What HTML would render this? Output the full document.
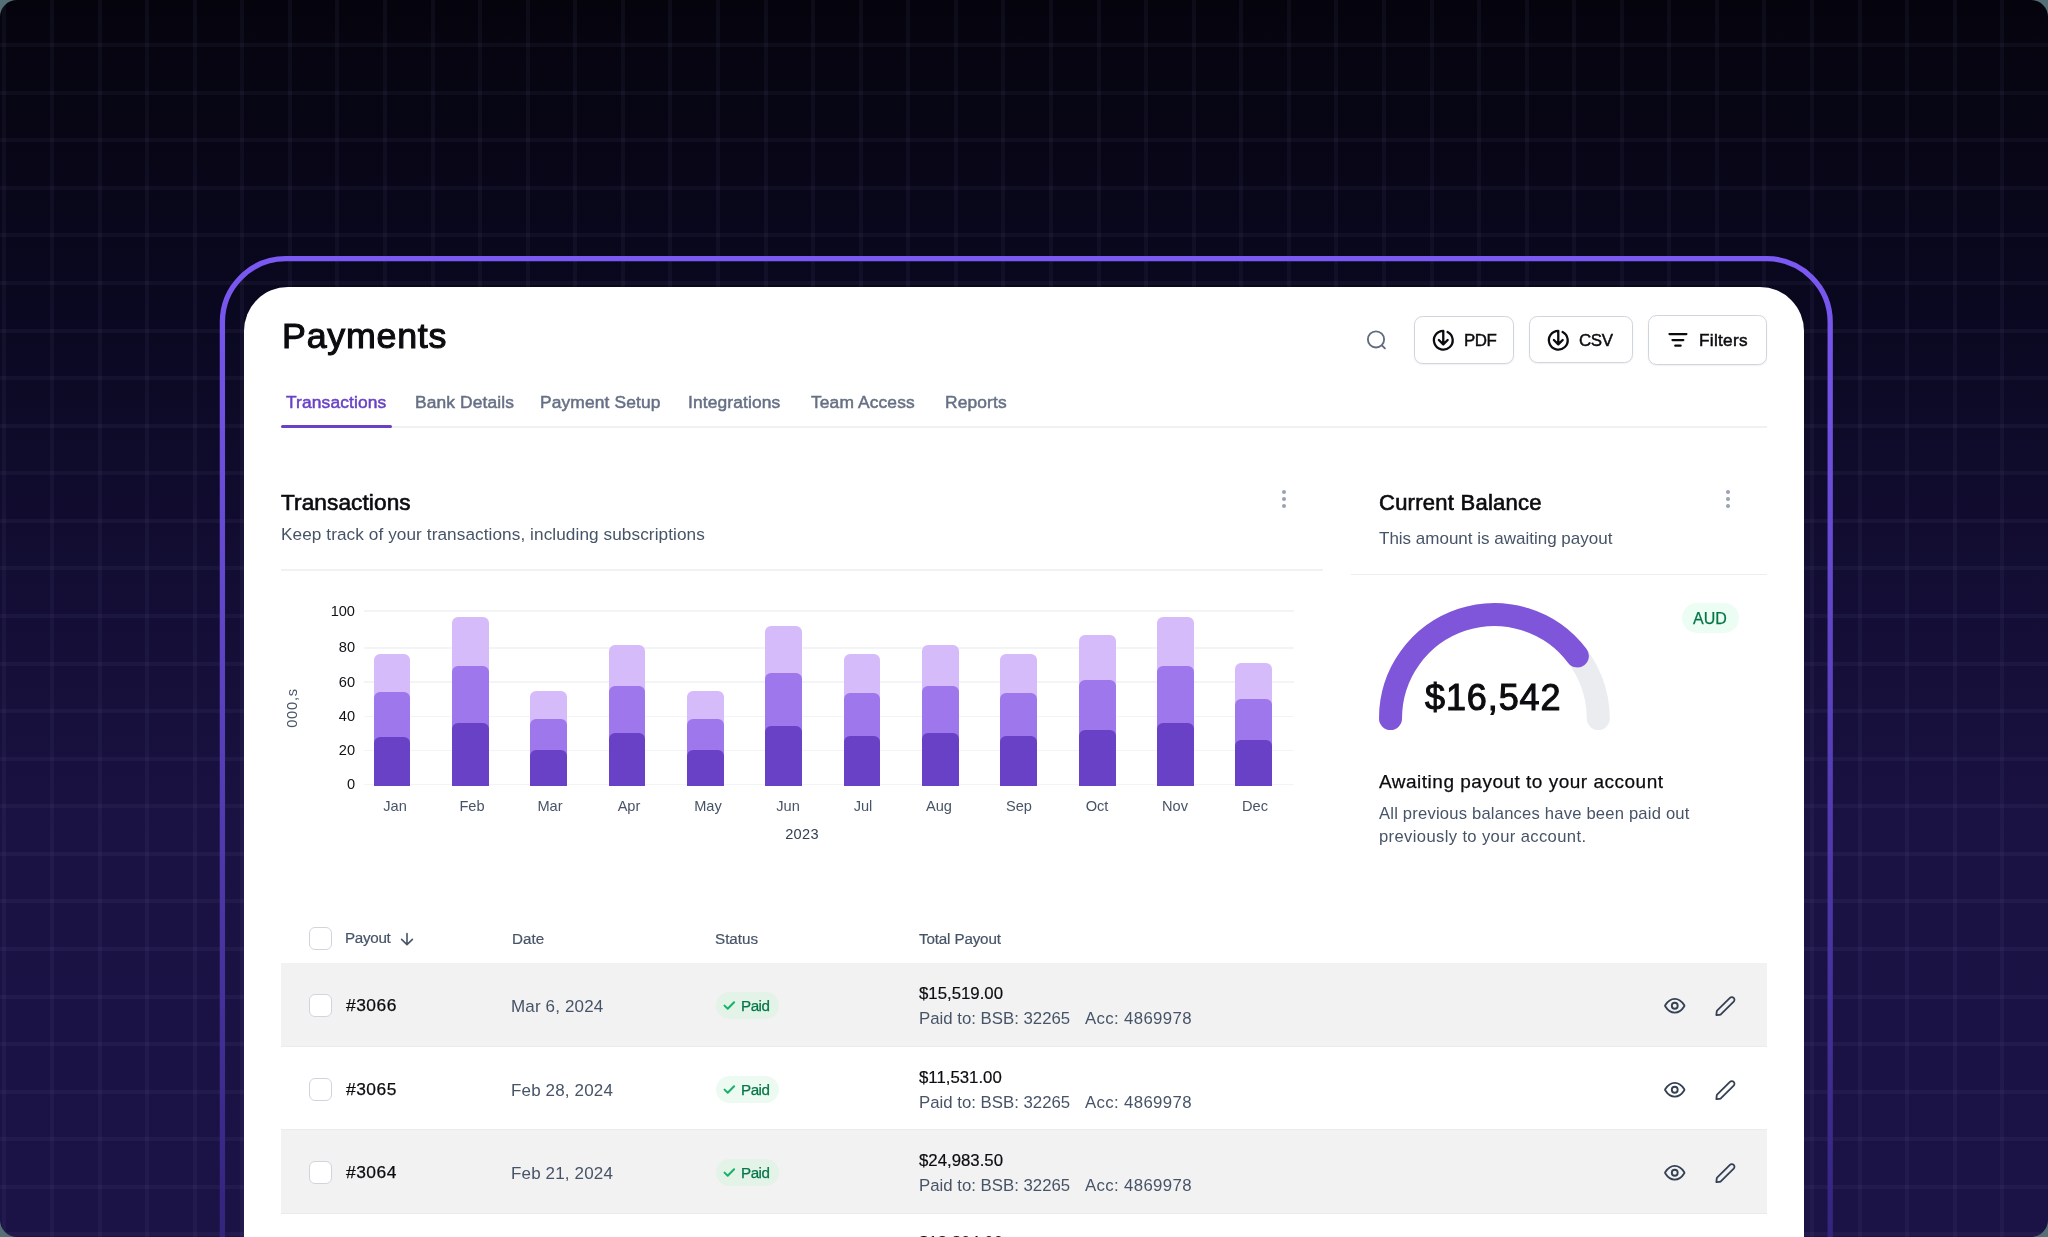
<!DOCTYPE html>
<html><head><meta charset="utf-8"><title>Payments</title>
<style>
html,body{margin:0;padding:0;}
body{width:2048px;height:1237px;overflow:hidden;background:#546f75;position:relative;font-family:"Liberation Sans",sans-serif;}
.a{position:absolute;}
.t{position:absolute;white-space:pre;will-change:transform;}
svg{position:absolute;overflow:visible;}
</style></head><body>
<div class="a" style="left:0;top:0;width:2048px;height:1237px;border-radius:17px;overflow:hidden;background:linear-gradient(180deg,#05040d 0%,#0a0820 25%,#140e36 50%,#1a1243 68%,#1b1245 100%);">
<div class="a" style="left:2.40px;top:0;width:4px;height:1237px;background:rgba(170,160,210,0.055);"></div>
<div class="a" style="left:49.97px;top:0;width:4px;height:1237px;background:rgba(170,160,210,0.055);"></div>
<div class="a" style="left:97.54px;top:0;width:4px;height:1237px;background:rgba(170,160,210,0.055);"></div>
<div class="a" style="left:145.11px;top:0;width:4px;height:1237px;background:rgba(170,160,210,0.055);"></div>
<div class="a" style="left:192.68px;top:0;width:4px;height:1237px;background:rgba(170,160,210,0.055);"></div>
<div class="a" style="left:240.25px;top:0;width:4px;height:1237px;background:rgba(170,160,210,0.055);"></div>
<div class="a" style="left:287.82px;top:0;width:4px;height:1237px;background:rgba(170,160,210,0.055);"></div>
<div class="a" style="left:335.39px;top:0;width:4px;height:1237px;background:rgba(170,160,210,0.055);"></div>
<div class="a" style="left:382.96px;top:0;width:4px;height:1237px;background:rgba(170,160,210,0.055);"></div>
<div class="a" style="left:430.53px;top:0;width:4px;height:1237px;background:rgba(170,160,210,0.055);"></div>
<div class="a" style="left:478.10px;top:0;width:4px;height:1237px;background:rgba(170,160,210,0.055);"></div>
<div class="a" style="left:525.67px;top:0;width:4px;height:1237px;background:rgba(170,160,210,0.055);"></div>
<div class="a" style="left:573.24px;top:0;width:4px;height:1237px;background:rgba(170,160,210,0.055);"></div>
<div class="a" style="left:620.81px;top:0;width:4px;height:1237px;background:rgba(170,160,210,0.055);"></div>
<div class="a" style="left:668.38px;top:0;width:4px;height:1237px;background:rgba(170,160,210,0.055);"></div>
<div class="a" style="left:715.95px;top:0;width:4px;height:1237px;background:rgba(170,160,210,0.055);"></div>
<div class="a" style="left:763.52px;top:0;width:4px;height:1237px;background:rgba(170,160,210,0.055);"></div>
<div class="a" style="left:811.09px;top:0;width:4px;height:1237px;background:rgba(170,160,210,0.055);"></div>
<div class="a" style="left:858.66px;top:0;width:4px;height:1237px;background:rgba(170,160,210,0.055);"></div>
<div class="a" style="left:906.23px;top:0;width:4px;height:1237px;background:rgba(170,160,210,0.055);"></div>
<div class="a" style="left:953.80px;top:0;width:4px;height:1237px;background:rgba(170,160,210,0.055);"></div>
<div class="a" style="left:1001.37px;top:0;width:4px;height:1237px;background:rgba(170,160,210,0.055);"></div>
<div class="a" style="left:1048.94px;top:0;width:4px;height:1237px;background:rgba(170,160,210,0.055);"></div>
<div class="a" style="left:1096.51px;top:0;width:4px;height:1237px;background:rgba(170,160,210,0.055);"></div>
<div class="a" style="left:1144.08px;top:0;width:4px;height:1237px;background:rgba(170,160,210,0.055);"></div>
<div class="a" style="left:1191.65px;top:0;width:4px;height:1237px;background:rgba(170,160,210,0.055);"></div>
<div class="a" style="left:1239.22px;top:0;width:4px;height:1237px;background:rgba(170,160,210,0.055);"></div>
<div class="a" style="left:1286.79px;top:0;width:4px;height:1237px;background:rgba(170,160,210,0.055);"></div>
<div class="a" style="left:1334.36px;top:0;width:4px;height:1237px;background:rgba(170,160,210,0.055);"></div>
<div class="a" style="left:1381.93px;top:0;width:4px;height:1237px;background:rgba(170,160,210,0.055);"></div>
<div class="a" style="left:1429.50px;top:0;width:4px;height:1237px;background:rgba(170,160,210,0.055);"></div>
<div class="a" style="left:1477.07px;top:0;width:4px;height:1237px;background:rgba(170,160,210,0.055);"></div>
<div class="a" style="left:1524.64px;top:0;width:4px;height:1237px;background:rgba(170,160,210,0.055);"></div>
<div class="a" style="left:1572.21px;top:0;width:4px;height:1237px;background:rgba(170,160,210,0.055);"></div>
<div class="a" style="left:1619.78px;top:0;width:4px;height:1237px;background:rgba(170,160,210,0.055);"></div>
<div class="a" style="left:1667.35px;top:0;width:4px;height:1237px;background:rgba(170,160,210,0.055);"></div>
<div class="a" style="left:1714.92px;top:0;width:4px;height:1237px;background:rgba(170,160,210,0.055);"></div>
<div class="a" style="left:1762.49px;top:0;width:4px;height:1237px;background:rgba(170,160,210,0.055);"></div>
<div class="a" style="left:1810.06px;top:0;width:4px;height:1237px;background:rgba(170,160,210,0.055);"></div>
<div class="a" style="left:1857.63px;top:0;width:4px;height:1237px;background:rgba(170,160,210,0.055);"></div>
<div class="a" style="left:1905.20px;top:0;width:4px;height:1237px;background:rgba(170,160,210,0.055);"></div>
<div class="a" style="left:1952.77px;top:0;width:4px;height:1237px;background:rgba(170,160,210,0.055);"></div>
<div class="a" style="left:2000.34px;top:0;width:4px;height:1237px;background:rgba(170,160,210,0.055);"></div>
<div class="a" style="left:2047.91px;top:0;width:4px;height:1237px;background:rgba(170,160,210,0.055);"></div>
<div class="a" style="left:0;top:43.20px;width:2048px;height:4px;background:rgba(170,160,210,0.055);"></div>
<div class="a" style="left:0;top:90.77px;width:2048px;height:4px;background:rgba(170,160,210,0.055);"></div>
<div class="a" style="left:0;top:138.34px;width:2048px;height:4px;background:rgba(170,160,210,0.055);"></div>
<div class="a" style="left:0;top:185.91px;width:2048px;height:4px;background:rgba(170,160,210,0.055);"></div>
<div class="a" style="left:0;top:233.48px;width:2048px;height:4px;background:rgba(170,160,210,0.055);"></div>
<div class="a" style="left:0;top:281.05px;width:2048px;height:4px;background:rgba(170,160,210,0.055);"></div>
<div class="a" style="left:0;top:328.62px;width:2048px;height:4px;background:rgba(170,160,210,0.055);"></div>
<div class="a" style="left:0;top:376.19px;width:2048px;height:4px;background:rgba(170,160,210,0.055);"></div>
<div class="a" style="left:0;top:423.76px;width:2048px;height:4px;background:rgba(170,160,210,0.055);"></div>
<div class="a" style="left:0;top:471.33px;width:2048px;height:4px;background:rgba(170,160,210,0.055);"></div>
<div class="a" style="left:0;top:518.90px;width:2048px;height:4px;background:rgba(170,160,210,0.055);"></div>
<div class="a" style="left:0;top:566.47px;width:2048px;height:4px;background:rgba(170,160,210,0.055);"></div>
<div class="a" style="left:0;top:614.04px;width:2048px;height:4px;background:rgba(170,160,210,0.055);"></div>
<div class="a" style="left:0;top:661.61px;width:2048px;height:4px;background:rgba(170,160,210,0.055);"></div>
<div class="a" style="left:0;top:709.18px;width:2048px;height:4px;background:rgba(170,160,210,0.055);"></div>
<div class="a" style="left:0;top:756.75px;width:2048px;height:4px;background:rgba(170,160,210,0.055);"></div>
<div class="a" style="left:0;top:804.32px;width:2048px;height:4px;background:rgba(170,160,210,0.055);"></div>
<div class="a" style="left:0;top:851.89px;width:2048px;height:4px;background:rgba(170,160,210,0.055);"></div>
<div class="a" style="left:0;top:899.46px;width:2048px;height:4px;background:rgba(170,160,210,0.055);"></div>
<div class="a" style="left:0;top:947.03px;width:2048px;height:4px;background:rgba(170,160,210,0.055);"></div>
<div class="a" style="left:0;top:994.60px;width:2048px;height:4px;background:rgba(170,160,210,0.055);"></div>
<div class="a" style="left:0;top:1042.17px;width:2048px;height:4px;background:rgba(170,160,210,0.055);"></div>
<div class="a" style="left:0;top:1089.74px;width:2048px;height:4px;background:rgba(170,160,210,0.055);"></div>
<div class="a" style="left:0;top:1137.31px;width:2048px;height:4px;background:rgba(170,160,210,0.055);"></div>
<div class="a" style="left:0;top:1184.88px;width:2048px;height:4px;background:rgba(170,160,210,0.055);"></div>
<div class="a" style="left:0;top:1232.45px;width:2048px;height:4px;background:rgba(170,160,210,0.055);"></div>
</div>
<svg style="left:0;top:0" width="2048" height="1237" viewBox="0 0 2048 1237">
<defs><linearGradient id="pg" x1="0" y1="256" x2="0" y2="1237" gradientUnits="userSpaceOnUse">
<stop offset="0" stop-color="#7b59f3"/><stop offset="1" stop-color="#33247c"/></linearGradient></defs>
<rect x="222.4" y="258.7" width="1607.8" height="1200" rx="63.5" ry="63.5" fill="none" stroke="url(#pg)" stroke-width="5.3"/>
</svg>
<div class="a" style="left:244px;top:287px;width:1560px;height:1100px;background:#fff;border-radius:44px;"></div>
<div class="t" style="left:281.50px;top:318.90px;font-size:35.8px;line-height:35.8px;font-weight:400;color:#0c0c10;letter-spacing:0.75px;-webkit-text-stroke:1.1px #0c0c10;">Payments</div>
<svg style="left:1364px;top:328px" width="24" height="24" viewBox="0 0 24 24"><circle cx="12" cy="11.4" r="8.1" fill="none" stroke="#5f6b80" stroke-width="1.85"/><path d="M18.2 17.6 L20.9 20.3" stroke="#5f6b80" stroke-width="1.85" stroke-linecap="round"/></svg>
<div class="a" style="left:1413.6px;top:316.2px;width:100.70000000000005px;height:47.400000000000034px;box-sizing:border-box;border:1.3px solid #d0d5dd;border-radius:8.5px;background:#fff;box-shadow:0 1px 2px rgba(16,24,40,0.06);"></div>
<div class="a" style="left:1528.6px;top:316.3px;width:104.70000000000005px;height:47.0px;box-sizing:border-box;border:1.3px solid #d0d5dd;border-radius:8.5px;background:#fff;box-shadow:0 1px 2px rgba(16,24,40,0.06);"></div>
<div class="a" style="left:1648.1px;top:314.8px;width:118.70000000000005px;height:50.39999999999998px;box-sizing:border-box;border:1.3px solid #d0d5dd;border-radius:8.5px;background:#fff;box-shadow:0 1px 2px rgba(16,24,40,0.06);"></div>
<svg style="left:1432.12px;top:328.92px" width="22.56" height="22.56" viewBox="0 0 24 24"><path d="M16.6 3.1 A10 10 0 1 1 12 2 V16.4 M7.3 11.7 L12 16.4 L16.7 11.7" fill="none" stroke="#0c0c10" stroke-width="2.45" stroke-linecap="round" stroke-linejoin="round"/></svg>
<svg style="left:1547.12px;top:329.02px" width="22.56" height="22.56" viewBox="0 0 24 24"><path d="M16.6 3.1 A10 10 0 1 1 12 2 V16.4 M7.3 11.7 L12 16.4 L16.7 11.7" fill="none" stroke="#0c0c10" stroke-width="2.45" stroke-linecap="round" stroke-linejoin="round"/></svg>
<div class="t" style="left:1464.20px;top:332.69px;font-size:16.9px;line-height:16.9px;font-weight:400;color:#0c0c10;letter-spacing:-0.5px;-webkit-text-stroke:0.45px #0c0c10;">PDF</div>
<div class="t" style="left:1579.30px;top:332.69px;font-size:16.9px;line-height:16.9px;font-weight:400;color:#0c0c10;letter-spacing:-0.4px;-webkit-text-stroke:0.45px #0c0c10;">CSV</div>
<div class="t" style="left:1699.00px;top:332.44px;font-size:17.2px;line-height:17.2px;font-weight:400;color:#0c0c10;letter-spacing:0.3px;-webkit-text-stroke:0.5px #0c0c10;">Filters</div>
<svg style="left:1660px;top:325px" width="36" height="30" viewBox="0 0 36 30"><path d="M9.5 9.1 H26.4 M12.5 15.1 H23.3 M15.3 20.7 H20.6" stroke="#0c0c10" stroke-width="2.3" stroke-linecap="round"/></svg>
<div class="t" style="left:285.60px;top:394.27px;font-size:17.4px;line-height:17.4px;font-weight:400;color:#6941c6;letter-spacing:0.12px;-webkit-text-stroke:0.5px #6941c6;">Transactions</div>
<div class="t" style="left:414.90px;top:394.27px;font-size:17.4px;line-height:17.4px;font-weight:400;color:#667085;letter-spacing:0.12px;-webkit-text-stroke:0.5px #667085;">Bank Details</div>
<div class="t" style="left:539.90px;top:394.27px;font-size:17.4px;line-height:17.4px;font-weight:400;color:#667085;letter-spacing:0.12px;-webkit-text-stroke:0.5px #667085;">Payment Setup</div>
<div class="t" style="left:687.60px;top:394.27px;font-size:17.4px;line-height:17.4px;font-weight:400;color:#667085;letter-spacing:0.12px;-webkit-text-stroke:0.5px #667085;">Integrations</div>
<div class="t" style="left:810.90px;top:394.27px;font-size:17.4px;line-height:17.4px;font-weight:400;color:#667085;letter-spacing:0.12px;-webkit-text-stroke:0.5px #667085;">Team Access</div>
<div class="t" style="left:945.10px;top:394.27px;font-size:17.4px;line-height:17.4px;font-weight:400;color:#667085;letter-spacing:0.12px;-webkit-text-stroke:0.5px #667085;">Reports</div>
<div class="a" style="left:281.00px;top:426.00px;width:1486.00px;height:2.00px;background:#f0f1f3;"></div>
<div class="a" style="left:281.00px;top:425.00px;width:111.00px;height:3.00px;background:#6941c6;border-radius:1.5px;"></div>
<div class="t" style="left:280.80px;top:492.07px;font-size:22.6px;line-height:22.6px;font-weight:400;color:#0c0c10;letter-spacing:0.1px;-webkit-text-stroke:0.65px #0c0c10;">Transactions</div>
<div class="t" style="left:280.50px;top:525.84px;font-size:17.2px;line-height:17.2px;font-weight:400;color:#475467;letter-spacing:0.08px;">Keep track of your transactions, including subscriptions</div>
<div class="a" style="left:1282.00px;top:490.30px;width:4px;height:4px;border-radius:50%;background:#98a2b3;"></div>
<div class="a" style="left:1282.00px;top:497.10px;width:4px;height:4px;border-radius:50%;background:#98a2b3;"></div>
<div class="a" style="left:1282.00px;top:503.90px;width:4px;height:4px;border-radius:50%;background:#98a2b3;"></div>
<div class="a" style="left:281.00px;top:569.00px;width:1042.00px;height:1.80px;background:#f0f1f3;"></div>
<div class="t" style="left:1378.80px;top:491.98px;font-size:22.0px;line-height:22.0px;font-weight:400;color:#0c0c10;letter-spacing:0.25px;-webkit-text-stroke:0.65px #0c0c10;">Current Balance</div>
<div class="t" style="left:1378.50px;top:530.21px;font-size:17.0px;line-height:17.0px;font-weight:400;color:#475467;">This amount is awaiting payout</div>
<div class="a" style="left:1725.70px;top:490.10px;width:4px;height:4px;border-radius:50%;background:#98a2b3;"></div>
<div class="a" style="left:1725.70px;top:497.30px;width:4px;height:4px;border-radius:50%;background:#98a2b3;"></div>
<div class="a" style="left:1725.70px;top:504.30px;width:4px;height:4px;border-radius:50%;background:#98a2b3;"></div>
<div class="a" style="left:1351.00px;top:573.80px;width:416.00px;height:1.60px;background:#eceff2;"></div>
<svg style="left:0;top:0" width="2048" height="1237" viewBox="0 0 2048 1237">
<path d="M1390.50 718.50 A103.9 103.9 0 0 1 1598.30 718.50" fill="none" stroke="#eaecf0" stroke-width="23" stroke-linecap="round"/>
<path d="M1390.50 718.50 A103.9 103.9 0 0 1 1577.38 655.97" fill="none" stroke="#7f56d9" stroke-width="23" stroke-linecap="round"/>
</svg>
<div class="t" style="left:1425.00px;top:679.53px;font-size:36.0px;line-height:36.0px;font-weight:400;color:#0c0c10;letter-spacing:0.9px;-webkit-text-stroke:1.05px #0c0c10;">$16,542</div>
<div class="a" style="left:1682.4px;top:603px;width:56.6px;height:29.9px;border-radius:15px;background:#ecfdf3;"></div>
<div class="t" style="left:1692.50px;top:610.66px;font-size:16px;line-height:16px;font-weight:400;color:#067647;-webkit-text-stroke:0.25px #067647;">AUD</div>
<div class="t" style="left:1378.80px;top:771.52px;font-size:19.0px;line-height:19.0px;font-weight:400;color:#0c0c10;letter-spacing:0.5px;-webkit-text-stroke:0.25px #0c0c10;">Awaiting payout to your account</div>
<div class="t" style="left:1378.80px;top:806.45px;font-size:16.6px;line-height:16.6px;font-weight:400;color:#475467;letter-spacing:0.2px;">All previous balances have been paid out</div>
<div class="t" style="left:1378.80px;top:828.95px;font-size:16.6px;line-height:16.6px;font-weight:400;color:#475467;letter-spacing:0.37px;">previously to your account.</div>
<div class="a" style="left:363.50px;top:610.40px;width:930.20px;height:1.60px;background:#f3f4f6;"></div>
<div class="a" style="left:363.50px;top:647.40px;width:930.20px;height:1.60px;background:#f3f4f6;"></div>
<div class="a" style="left:363.50px;top:681.30px;width:930.20px;height:1.60px;background:#f3f4f6;"></div>
<div class="a" style="left:363.50px;top:715.60px;width:930.20px;height:1.60px;background:#f3f4f6;"></div>
<div class="a" style="left:363.50px;top:749.80px;width:930.20px;height:1.60px;background:#f3f4f6;"></div>
<div class="a" style="left:363.50px;top:783.90px;width:930.20px;height:1.60px;background:#f3f4f6;"></div>
<div class="t" style="left:55.00px;width:300px;text-align:right;top:603.54px;font-size:14.6px;line-height:14.6px;font-weight:400;color:#111116;">100</div>
<div class="t" style="left:55.00px;width:300px;text-align:right;top:640.44px;font-size:14.6px;line-height:14.6px;font-weight:400;color:#111116;">80</div>
<div class="t" style="left:55.00px;width:300px;text-align:right;top:674.64px;font-size:14.6px;line-height:14.6px;font-weight:400;color:#111116;">60</div>
<div class="t" style="left:55.00px;width:300px;text-align:right;top:708.94px;font-size:14.6px;line-height:14.6px;font-weight:400;color:#111116;">40</div>
<div class="t" style="left:55.00px;width:300px;text-align:right;top:743.24px;font-size:14.6px;line-height:14.6px;font-weight:400;color:#111116;">20</div>
<div class="t" style="left:55.00px;width:300px;text-align:right;top:777.24px;font-size:14.6px;line-height:14.6px;font-weight:400;color:#111116;">0</div>
<div class="t" style="left:251.80px;top:698.70px;width:80px;height:18px;line-height:18px;font-size:14.6px;text-align:center;color:#475467;letter-spacing:0.8px;transform:rotate(-90deg);">000,s</div>
<div class="a" style="left:373.50px;top:654.00px;width:36.8px;height:132.00px;background:#d6bbfb;border-radius:6px 6px 0 0;"></div>
<div class="a" style="left:373.50px;top:692.40px;width:36.8px;height:93.60px;background:#9e77ed;border-radius:6px 6px 0 0;"></div>
<div class="a" style="left:373.50px;top:736.50px;width:36.8px;height:49.50px;background:#6941c6;border-radius:6px 6px 0 0;"></div>
<div class="t" style="left:94.50px;width:600px;text-align:center;top:799.44px;font-size:14.6px;line-height:14.6px;font-weight:400;color:#475467;">Jan</div>
<div class="a" style="left:451.86px;top:616.70px;width:36.8px;height:169.30px;background:#d6bbfb;border-radius:6px 6px 0 0;"></div>
<div class="a" style="left:451.86px;top:666.00px;width:36.8px;height:120.00px;background:#9e77ed;border-radius:6px 6px 0 0;"></div>
<div class="a" style="left:451.86px;top:722.60px;width:36.8px;height:63.40px;background:#6941c6;border-radius:6px 6px 0 0;"></div>
<div class="t" style="left:172.00px;width:600px;text-align:center;top:799.44px;font-size:14.6px;line-height:14.6px;font-weight:400;color:#475467;">Feb</div>
<div class="a" style="left:530.22px;top:690.90px;width:36.8px;height:95.10px;background:#d6bbfb;border-radius:6px 6px 0 0;"></div>
<div class="a" style="left:530.22px;top:718.50px;width:36.8px;height:67.50px;background:#9e77ed;border-radius:6px 6px 0 0;"></div>
<div class="a" style="left:530.22px;top:750.40px;width:36.8px;height:35.60px;background:#6941c6;border-radius:6px 6px 0 0;"></div>
<div class="t" style="left:250.40px;width:600px;text-align:center;top:799.44px;font-size:14.6px;line-height:14.6px;font-weight:400;color:#475467;">Mar</div>
<div class="a" style="left:608.58px;top:644.50px;width:36.8px;height:141.50px;background:#d6bbfb;border-radius:6px 6px 0 0;"></div>
<div class="a" style="left:608.58px;top:686.00px;width:36.8px;height:100.00px;background:#9e77ed;border-radius:6px 6px 0 0;"></div>
<div class="a" style="left:608.58px;top:733.00px;width:36.8px;height:53.00px;background:#6941c6;border-radius:6px 6px 0 0;"></div>
<div class="t" style="left:328.80px;width:600px;text-align:center;top:799.44px;font-size:14.6px;line-height:14.6px;font-weight:400;color:#475467;">Apr</div>
<div class="a" style="left:686.94px;top:690.90px;width:36.8px;height:95.10px;background:#d6bbfb;border-radius:6px 6px 0 0;"></div>
<div class="a" style="left:686.94px;top:718.50px;width:36.8px;height:67.50px;background:#9e77ed;border-radius:6px 6px 0 0;"></div>
<div class="a" style="left:686.94px;top:750.40px;width:36.8px;height:35.60px;background:#6941c6;border-radius:6px 6px 0 0;"></div>
<div class="t" style="left:408.40px;width:600px;text-align:center;top:799.44px;font-size:14.6px;line-height:14.6px;font-weight:400;color:#475467;">May</div>
<div class="a" style="left:765.30px;top:625.90px;width:36.8px;height:160.10px;background:#d6bbfb;border-radius:6px 6px 0 0;"></div>
<div class="a" style="left:765.30px;top:672.80px;width:36.8px;height:113.20px;background:#9e77ed;border-radius:6px 6px 0 0;"></div>
<div class="a" style="left:765.30px;top:725.80px;width:36.8px;height:60.20px;background:#6941c6;border-radius:6px 6px 0 0;"></div>
<div class="t" style="left:487.90px;width:600px;text-align:center;top:799.44px;font-size:14.6px;line-height:14.6px;font-weight:400;color:#475467;">Jun</div>
<div class="a" style="left:843.66px;top:653.90px;width:36.8px;height:132.10px;background:#d6bbfb;border-radius:6px 6px 0 0;"></div>
<div class="a" style="left:843.66px;top:692.50px;width:36.8px;height:93.50px;background:#9e77ed;border-radius:6px 6px 0 0;"></div>
<div class="a" style="left:843.66px;top:736.30px;width:36.8px;height:49.70px;background:#6941c6;border-radius:6px 6px 0 0;"></div>
<div class="t" style="left:562.90px;width:600px;text-align:center;top:799.44px;font-size:14.6px;line-height:14.6px;font-weight:400;color:#475467;">Jul</div>
<div class="a" style="left:922.02px;top:644.50px;width:36.8px;height:141.50px;background:#d6bbfb;border-radius:6px 6px 0 0;"></div>
<div class="a" style="left:922.02px;top:686.00px;width:36.8px;height:100.00px;background:#9e77ed;border-radius:6px 6px 0 0;"></div>
<div class="a" style="left:922.02px;top:733.00px;width:36.8px;height:53.00px;background:#6941c6;border-radius:6px 6px 0 0;"></div>
<div class="t" style="left:638.90px;width:600px;text-align:center;top:799.44px;font-size:14.6px;line-height:14.6px;font-weight:400;color:#475467;">Aug</div>
<div class="a" style="left:1000.38px;top:653.90px;width:36.8px;height:132.10px;background:#d6bbfb;border-radius:6px 6px 0 0;"></div>
<div class="a" style="left:1000.38px;top:692.50px;width:36.8px;height:93.50px;background:#9e77ed;border-radius:6px 6px 0 0;"></div>
<div class="a" style="left:1000.38px;top:736.30px;width:36.8px;height:49.70px;background:#6941c6;border-radius:6px 6px 0 0;"></div>
<div class="t" style="left:718.50px;width:600px;text-align:center;top:799.44px;font-size:14.6px;line-height:14.6px;font-weight:400;color:#475467;">Sep</div>
<div class="a" style="left:1078.74px;top:635.30px;width:36.8px;height:150.70px;background:#d6bbfb;border-radius:6px 6px 0 0;"></div>
<div class="a" style="left:1078.74px;top:679.70px;width:36.8px;height:106.30px;background:#9e77ed;border-radius:6px 6px 0 0;"></div>
<div class="a" style="left:1078.74px;top:729.70px;width:36.8px;height:56.30px;background:#6941c6;border-radius:6px 6px 0 0;"></div>
<div class="t" style="left:796.50px;width:600px;text-align:center;top:799.44px;font-size:14.6px;line-height:14.6px;font-weight:400;color:#475467;">Oct</div>
<div class="a" style="left:1157.10px;top:616.70px;width:36.8px;height:169.30px;background:#d6bbfb;border-radius:6px 6px 0 0;"></div>
<div class="a" style="left:1157.10px;top:666.00px;width:36.8px;height:120.00px;background:#9e77ed;border-radius:6px 6px 0 0;"></div>
<div class="a" style="left:1157.10px;top:722.60px;width:36.8px;height:63.40px;background:#6941c6;border-radius:6px 6px 0 0;"></div>
<div class="t" style="left:875.10px;width:600px;text-align:center;top:799.44px;font-size:14.6px;line-height:14.6px;font-weight:400;color:#475467;">Nov</div>
<div class="a" style="left:1235.46px;top:663.10px;width:36.8px;height:122.90px;background:#d6bbfb;border-radius:6px 6px 0 0;"></div>
<div class="a" style="left:1235.46px;top:699.00px;width:36.8px;height:87.00px;background:#9e77ed;border-radius:6px 6px 0 0;"></div>
<div class="a" style="left:1235.46px;top:739.90px;width:36.8px;height:46.10px;background:#6941c6;border-radius:6px 6px 0 0;"></div>
<div class="t" style="left:954.50px;width:600px;text-align:center;top:799.44px;font-size:14.6px;line-height:14.6px;font-weight:400;color:#475467;">Dec</div>
<div class="t" style="left:502.00px;width:600px;text-align:center;top:826.64px;font-size:14.6px;line-height:14.6px;font-weight:400;color:#344054;letter-spacing:0.3px;">2023</div>
<div class="a" style="left:309.00px;top:927.40px;width:22.8px;height:22.8px;box-sizing:border-box;border:1.3px solid #d0d5dd;border-radius:6px;background:#fff;"></div>
<div class="t" style="left:345.20px;top:930.43px;font-size:15.2px;line-height:15.2px;font-weight:400;color:#475467;letter-spacing:-0.3px;-webkit-text-stroke:0.2px #475467;">Payout</div>
<svg style="left:398px;top:930px" width="18" height="18" viewBox="0 0 18 18"><path d="M9 3.5 V14.6 M3.6 9.4 L9 14.6 L14.4 9.4" fill="none" stroke="#475467" stroke-width="1.6" stroke-linecap="round" stroke-linejoin="round"/></svg>
<div class="t" style="left:511.50px;top:930.93px;font-size:15.2px;line-height:15.2px;font-weight:400;color:#475467;-webkit-text-stroke:0.2px #475467;">Date</div>
<div class="t" style="left:715.00px;top:930.93px;font-size:15.2px;line-height:15.2px;font-weight:400;color:#475467;-webkit-text-stroke:0.2px #475467;">Status</div>
<div class="t" style="left:919.30px;top:930.93px;font-size:15.2px;line-height:15.2px;font-weight:400;color:#475467;letter-spacing:-0.15px;-webkit-text-stroke:0.2px #475467;">Total Payout</div>
<div class="a" style="left:281.00px;top:963.00px;width:1486.00px;height:84.00px;background:#f2f2f3;border-bottom:1px solid #e9ebef;box-sizing:border-box;"></div>
<div class="a" style="left:309.20px;top:994.30px;width:22.8px;height:22.8px;box-sizing:border-box;border:1.3px solid #d0d5dd;border-radius:6px;background:#fff;"></div>
<div class="t" style="left:345.80px;top:997.17px;font-size:17.4px;line-height:17.4px;font-weight:400;color:#0c0c10;letter-spacing:0.5px;-webkit-text-stroke:0.25px #0c0c10;">#3066</div>
<div class="t" style="left:511.30px;top:997.51px;font-size:17.0px;line-height:17.0px;font-weight:400;color:#475467;letter-spacing:0.15px;">Mar 6, 2024</div>
<div class="a" style="left:715.7px;top:992.20px;width:63.5px;height:27.1px;border-radius:14px;background:#e3f3e8;"></div>
<svg style="left:720px;top:995.50px" width="18" height="18" viewBox="0 0 18 18"><path d="M4.5 9.6 L7.7 12.7 L14.1 6.2" fill="none" stroke="#17b26a" stroke-width="2" stroke-linecap="round" stroke-linejoin="round"/></svg>
<div class="t" style="left:740.90px;top:997.93px;font-size:15.2px;line-height:15.2px;font-weight:400;color:#067647;letter-spacing:-0.5px;-webkit-text-stroke:0.25px #067647;">Paid</div>
<div class="t" style="left:919.00px;top:985.78px;font-size:16.8px;line-height:16.8px;font-weight:400;color:#0c0c10;-webkit-text-stroke:0.2px #0c0c10;">$15,519.00</div>
<div class="t" style="left:919.00px;top:1010.98px;font-size:16.8px;line-height:16.8px;font-weight:400;color:#475467;">Paid to: BSB: 32265</div>
<div class="t" style="left:1085.00px;top:1010.98px;font-size:16.8px;line-height:16.8px;font-weight:400;color:#475467;letter-spacing:0.35px;">Acc: 4869978</div>
<svg style="left:1662.75px;top:994.05px" width="23.5" height="23.5" viewBox="0 0 20 20"><path d="M2.017 10.594C1.903 10.415 1.847 10.325 1.815 10.186C1.791 10.082 1.791 9.918 1.815 9.814C1.847 9.675 1.903 9.585 2.017 9.406C2.955 7.921 5.746 4.167 10 4.167C14.254 4.167 17.046 7.921 17.984 9.406C18.097 9.585 18.154 9.675 18.186 9.814C18.210 9.918 18.210 10.082 18.186 10.186C18.154 10.325 18.097 10.415 17.984 10.594C17.046 12.079 14.254 15.833 10 15.833C5.746 15.833 2.955 12.079 2.017 10.594Z M10 12.5C11.381 12.5 12.5 11.381 12.5 10C12.5 8.619 11.381 7.5 10 7.5C8.620 7.5 7.500 8.619 7.500 10C7.500 11.381 8.620 12.5 10 12.5Z" fill="none" stroke="#344054" stroke-width="1.6" stroke-linecap="round" stroke-linejoin="round"/></svg>
<svg style="left:1713.85px;top:994.55px" width="22.5" height="22.5" viewBox="0 0 20 20"><path d="M2.397 15.096C2.435 14.752 2.454 14.579 2.506 14.418C2.553 14.276 2.618 14.140 2.701 14.014C2.794 13.873 2.916 13.750 3.162 13.505L14.167 2.500C15.087 1.579 16.580 1.579 17.500 2.500C18.421 3.420 18.421 4.913 17.500 5.833L6.495 16.839C6.250 17.084 6.127 17.206 5.986 17.299C5.861 17.382 5.725 17.447 5.582 17.494C5.421 17.546 5.248 17.565 4.904 17.603L2.084 17.917L2.397 15.096Z" fill="none" stroke="#344054" stroke-width="1.6" stroke-linecap="round" stroke-linejoin="round"/></svg>
<div class="a" style="left:281.00px;top:1047.00px;width:1486.00px;height:83.00px;background:#ffffff;border-bottom:1px solid #e9ebef;box-sizing:border-box;"></div>
<div class="a" style="left:309.20px;top:1078.30px;width:22.8px;height:22.8px;box-sizing:border-box;border:1.3px solid #d0d5dd;border-radius:6px;background:#fff;"></div>
<div class="t" style="left:345.80px;top:1081.17px;font-size:17.4px;line-height:17.4px;font-weight:400;color:#0c0c10;letter-spacing:0.5px;-webkit-text-stroke:0.25px #0c0c10;">#3065</div>
<div class="t" style="left:511.30px;top:1081.51px;font-size:17.0px;line-height:17.0px;font-weight:400;color:#475467;letter-spacing:0.15px;">Feb 28, 2024</div>
<div class="a" style="left:715.7px;top:1076.20px;width:63.5px;height:27.1px;border-radius:14px;background:#ecfaf1;"></div>
<svg style="left:720px;top:1079.50px" width="18" height="18" viewBox="0 0 18 18"><path d="M4.5 9.6 L7.7 12.7 L14.1 6.2" fill="none" stroke="#17b26a" stroke-width="2" stroke-linecap="round" stroke-linejoin="round"/></svg>
<div class="t" style="left:740.90px;top:1081.93px;font-size:15.2px;line-height:15.2px;font-weight:400;color:#067647;letter-spacing:-0.5px;-webkit-text-stroke:0.25px #067647;">Paid</div>
<div class="t" style="left:919.00px;top:1069.78px;font-size:16.8px;line-height:16.8px;font-weight:400;color:#0c0c10;-webkit-text-stroke:0.2px #0c0c10;">$11,531.00</div>
<div class="t" style="left:919.00px;top:1094.98px;font-size:16.8px;line-height:16.8px;font-weight:400;color:#475467;">Paid to: BSB: 32265</div>
<div class="t" style="left:1085.00px;top:1094.98px;font-size:16.8px;line-height:16.8px;font-weight:400;color:#475467;letter-spacing:0.35px;">Acc: 4869978</div>
<svg style="left:1662.75px;top:1078.05px" width="23.5" height="23.5" viewBox="0 0 20 20"><path d="M2.017 10.594C1.903 10.415 1.847 10.325 1.815 10.186C1.791 10.082 1.791 9.918 1.815 9.814C1.847 9.675 1.903 9.585 2.017 9.406C2.955 7.921 5.746 4.167 10 4.167C14.254 4.167 17.046 7.921 17.984 9.406C18.097 9.585 18.154 9.675 18.186 9.814C18.210 9.918 18.210 10.082 18.186 10.186C18.154 10.325 18.097 10.415 17.984 10.594C17.046 12.079 14.254 15.833 10 15.833C5.746 15.833 2.955 12.079 2.017 10.594Z M10 12.5C11.381 12.5 12.5 11.381 12.5 10C12.5 8.619 11.381 7.5 10 7.5C8.620 7.5 7.500 8.619 7.500 10C7.500 11.381 8.620 12.5 10 12.5Z" fill="none" stroke="#344054" stroke-width="1.6" stroke-linecap="round" stroke-linejoin="round"/></svg>
<svg style="left:1713.85px;top:1078.55px" width="22.5" height="22.5" viewBox="0 0 20 20"><path d="M2.397 15.096C2.435 14.752 2.454 14.579 2.506 14.418C2.553 14.276 2.618 14.140 2.701 14.014C2.794 13.873 2.916 13.750 3.162 13.505L14.167 2.500C15.087 1.579 16.580 1.579 17.500 2.500C18.421 3.420 18.421 4.913 17.500 5.833L6.495 16.839C6.250 17.084 6.127 17.206 5.986 17.299C5.861 17.382 5.725 17.447 5.582 17.494C5.421 17.546 5.248 17.565 4.904 17.603L2.084 17.917L2.397 15.096Z" fill="none" stroke="#344054" stroke-width="1.6" stroke-linecap="round" stroke-linejoin="round"/></svg>
<div class="a" style="left:281.00px;top:1130.00px;width:1486.00px;height:83.50px;background:#f2f2f3;border-bottom:1px solid #e9ebef;box-sizing:border-box;"></div>
<div class="a" style="left:309.20px;top:1161.30px;width:22.8px;height:22.8px;box-sizing:border-box;border:1.3px solid #d0d5dd;border-radius:6px;background:#fff;"></div>
<div class="t" style="left:345.80px;top:1164.17px;font-size:17.4px;line-height:17.4px;font-weight:400;color:#0c0c10;letter-spacing:0.5px;-webkit-text-stroke:0.25px #0c0c10;">#3064</div>
<div class="t" style="left:511.30px;top:1164.51px;font-size:17.0px;line-height:17.0px;font-weight:400;color:#475467;letter-spacing:0.15px;">Feb 21, 2024</div>
<div class="a" style="left:715.7px;top:1159.20px;width:63.5px;height:27.1px;border-radius:14px;background:#e3f3e8;"></div>
<svg style="left:720px;top:1162.50px" width="18" height="18" viewBox="0 0 18 18"><path d="M4.5 9.6 L7.7 12.7 L14.1 6.2" fill="none" stroke="#17b26a" stroke-width="2" stroke-linecap="round" stroke-linejoin="round"/></svg>
<div class="t" style="left:740.90px;top:1164.93px;font-size:15.2px;line-height:15.2px;font-weight:400;color:#067647;letter-spacing:-0.5px;-webkit-text-stroke:0.25px #067647;">Paid</div>
<div class="t" style="left:919.00px;top:1152.78px;font-size:16.8px;line-height:16.8px;font-weight:400;color:#0c0c10;-webkit-text-stroke:0.2px #0c0c10;">$24,983.50</div>
<div class="t" style="left:919.00px;top:1177.98px;font-size:16.8px;line-height:16.8px;font-weight:400;color:#475467;">Paid to: BSB: 32265</div>
<div class="t" style="left:1085.00px;top:1177.98px;font-size:16.8px;line-height:16.8px;font-weight:400;color:#475467;letter-spacing:0.35px;">Acc: 4869978</div>
<svg style="left:1662.75px;top:1161.05px" width="23.5" height="23.5" viewBox="0 0 20 20"><path d="M2.017 10.594C1.903 10.415 1.847 10.325 1.815 10.186C1.791 10.082 1.791 9.918 1.815 9.814C1.847 9.675 1.903 9.585 2.017 9.406C2.955 7.921 5.746 4.167 10 4.167C14.254 4.167 17.046 7.921 17.984 9.406C18.097 9.585 18.154 9.675 18.186 9.814C18.210 9.918 18.210 10.082 18.186 10.186C18.154 10.325 18.097 10.415 17.984 10.594C17.046 12.079 14.254 15.833 10 15.833C5.746 15.833 2.955 12.079 2.017 10.594Z M10 12.5C11.381 12.5 12.5 11.381 12.5 10C12.5 8.619 11.381 7.5 10 7.5C8.620 7.5 7.500 8.619 7.500 10C7.500 11.381 8.620 12.5 10 12.5Z" fill="none" stroke="#344054" stroke-width="1.6" stroke-linecap="round" stroke-linejoin="round"/></svg>
<svg style="left:1713.85px;top:1161.55px" width="22.5" height="22.5" viewBox="0 0 20 20"><path d="M2.397 15.096C2.435 14.752 2.454 14.579 2.506 14.418C2.553 14.276 2.618 14.140 2.701 14.014C2.794 13.873 2.916 13.750 3.162 13.505L14.167 2.500C15.087 1.579 16.580 1.579 17.500 2.500C18.421 3.420 18.421 4.913 17.500 5.833L6.495 16.839C6.250 17.084 6.127 17.206 5.986 17.299C5.861 17.382 5.725 17.447 5.582 17.494C5.421 17.546 5.248 17.565 4.904 17.603L2.084 17.917L2.397 15.096Z" fill="none" stroke="#344054" stroke-width="1.6" stroke-linecap="round" stroke-linejoin="round"/></svg>
<div class="a" style="left:281.00px;top:1213.50px;width:1486.00px;height:86.50px;background:#ffffff;border-bottom:1px solid #e9ebef;box-sizing:border-box;"></div>
<div class="a" style="left:309.20px;top:1244.80px;width:22.8px;height:22.8px;box-sizing:border-box;border:1.3px solid #d0d5dd;border-radius:6px;background:#fff;"></div>
<div class="t" style="left:345.80px;top:1247.67px;font-size:17.4px;line-height:17.4px;font-weight:400;color:#0c0c10;letter-spacing:0.5px;-webkit-text-stroke:0.25px #0c0c10;">#3063</div>
<div class="t" style="left:511.30px;top:1248.01px;font-size:17.0px;line-height:17.0px;font-weight:400;color:#475467;letter-spacing:0.15px;">Feb 14, 2024</div>
<div class="a" style="left:715.7px;top:1242.70px;width:63.5px;height:27.1px;border-radius:14px;background:#ecfaf1;"></div>
<svg style="left:720px;top:1246.00px" width="18" height="18" viewBox="0 0 18 18"><path d="M4.5 9.6 L7.7 12.7 L14.1 6.2" fill="none" stroke="#17b26a" stroke-width="2" stroke-linecap="round" stroke-linejoin="round"/></svg>
<div class="t" style="left:740.90px;top:1248.43px;font-size:15.2px;line-height:15.2px;font-weight:400;color:#067647;letter-spacing:-0.5px;-webkit-text-stroke:0.25px #067647;">Paid</div>
<div class="t" style="left:919.00px;top:1235.08px;font-size:16.8px;line-height:16.8px;font-weight:400;color:#0c0c10;-webkit-text-stroke:0.2px #0c0c10;">$18,204.00</div>
<div class="t" style="left:919.00px;top:1261.48px;font-size:16.8px;line-height:16.8px;font-weight:400;color:#475467;">Paid to: BSB: 32265</div>
<div class="t" style="left:1085.00px;top:1261.48px;font-size:16.8px;line-height:16.8px;font-weight:400;color:#475467;letter-spacing:0.35px;">Acc: 4869978</div>
<svg style="left:1662.75px;top:1244.55px" width="23.5" height="23.5" viewBox="0 0 20 20"><path d="M2.017 10.594C1.903 10.415 1.847 10.325 1.815 10.186C1.791 10.082 1.791 9.918 1.815 9.814C1.847 9.675 1.903 9.585 2.017 9.406C2.955 7.921 5.746 4.167 10 4.167C14.254 4.167 17.046 7.921 17.984 9.406C18.097 9.585 18.154 9.675 18.186 9.814C18.210 9.918 18.210 10.082 18.186 10.186C18.154 10.325 18.097 10.415 17.984 10.594C17.046 12.079 14.254 15.833 10 15.833C5.746 15.833 2.955 12.079 2.017 10.594Z M10 12.5C11.381 12.5 12.5 11.381 12.5 10C12.5 8.619 11.381 7.5 10 7.5C8.620 7.5 7.500 8.619 7.500 10C7.500 11.381 8.620 12.5 10 12.5Z" fill="none" stroke="#344054" stroke-width="1.6" stroke-linecap="round" stroke-linejoin="round"/></svg>
<svg style="left:1713.85px;top:1245.05px" width="22.5" height="22.5" viewBox="0 0 20 20"><path d="M2.397 15.096C2.435 14.752 2.454 14.579 2.506 14.418C2.553 14.276 2.618 14.140 2.701 14.014C2.794 13.873 2.916 13.750 3.162 13.505L14.167 2.500C15.087 1.579 16.580 1.579 17.500 2.500C18.421 3.420 18.421 4.913 17.500 5.833L6.495 16.839C6.250 17.084 6.127 17.206 5.986 17.299C5.861 17.382 5.725 17.447 5.582 17.494C5.421 17.546 5.248 17.565 4.904 17.603L2.084 17.917L2.397 15.096Z" fill="none" stroke="#344054" stroke-width="1.6" stroke-linecap="round" stroke-linejoin="round"/></svg>
</body></html>
